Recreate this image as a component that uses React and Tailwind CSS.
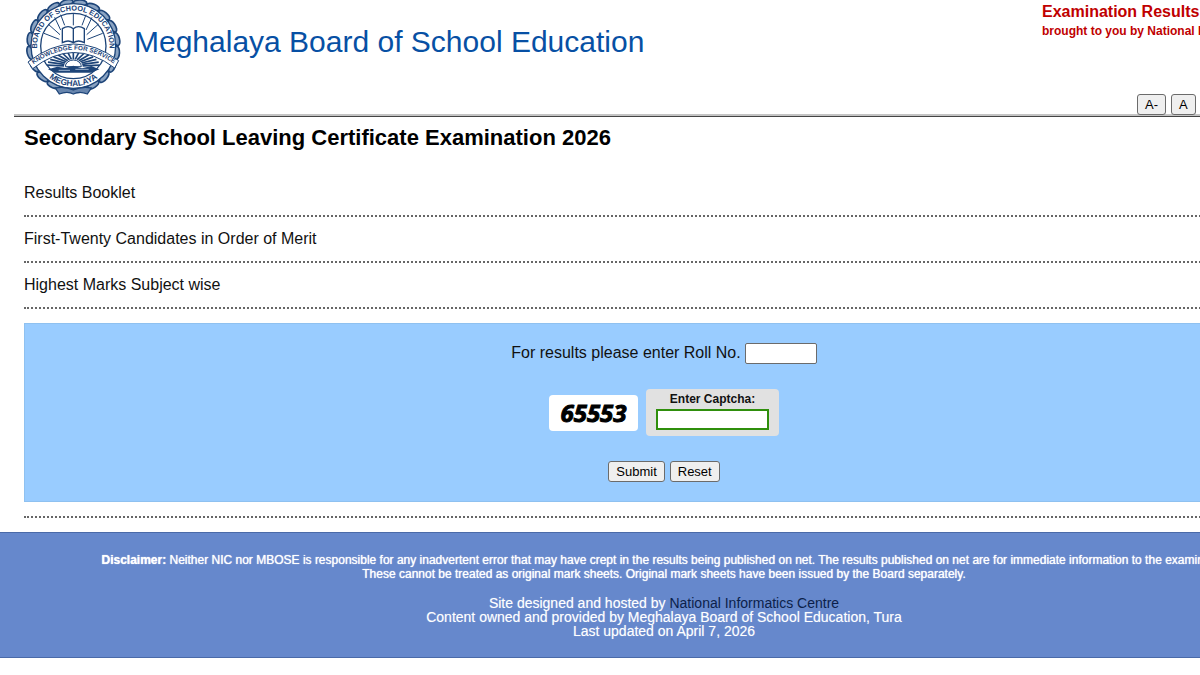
import { useState } from 'react';

const bookletLinks = [
    'Results Booklet',
    'First-Twenty Candidates in Order of Merit',
    'Highest Marks Subject wise',
];

const bookRays = [
    [118, 118, 72, 100],
    [120, 104, 84, 72],
    [122, 90, 104, 52],
    [134, 76, 122, 44],
    [160, 76, 160, 42],
    [186, 76, 198, 44],
    [198, 90, 216, 52],
    [200, 104, 236, 72],
    [202, 118, 248, 100],
];

const scallops = Array.from({ length: 20 }, (_, i) => {
    const angle = ((i + 0.5) / 20) * Math.PI * 2;
    return [160 + Math.cos(angle) * 131, 138 + Math.sin(angle) * 131, (angle * 180) / Math.PI + 84];
});

const sunRays = Array.from({ length: 15 }, (_, i) => {
    const angle = Math.PI + ((i + 0.5) / 15) * Math.PI;
    const cos = Math.cos(angle);
    const sin = Math.sin(angle);
    return [160 + cos * 28, 200 + sin * 22, 160 + cos * 80, 200 + sin * 44];
});

function BoardLogo() {
    return (
        <svg viewBox="0 0 330 300" className="h-[100px] w-[110px] shrink-0" role="img" aria-label="Board seal">
            <defs>
                <path id="seal-top" d="M 54 166 A 109 109 0 1 1 266 166" />
                <path id="seal-bottom" d="M 57 200 A 120 120 0 0 0 263 200" />
                <path id="seal-ribbon" d="M 36 196 Q 160 104 286 194" />
            </defs>

            {/* leafy rim */}
            {scallops.map(([x, y, turn], i) => (
                <ellipse
                    key={i}
                    rx="20"
                    ry="9"
                    transform={`translate(${x} ${y}) rotate(${turn})`}
                    fill="#8aa3c2"
                    stroke="#1d4478"
                    strokeWidth="5"
                />
            ))}
            <circle cx="160" cy="138" r="127" fill="#fff" stroke="#1d4478" strokeWidth="4" />
            <circle cx="160" cy="138" r="98" fill="#fff" stroke="#1d4478" strokeWidth="4" />

            {/* book and its rays */}
            <g stroke="#1d4478" strokeWidth="3">
                {bookRays.map(([x1, y1, x2, y2], i) => (
                    <line key={i} x1={x1} y1={y1} x2={x2} y2={y2} />
                ))}
            </g>
            <path
                d="M127 86 Q145 74 160 86 Q175 74 193 86 V128 Q175 118 160 128 Q145 118 127 128 Z M160 86 V128"
                fill="#fff"
                stroke="#1d4478"
                strokeWidth="4"
            />

            {/* rising sun over the hills */}
            <g stroke="#1d4478" strokeWidth="5">
                {sunRays.map(([x1, y1, x2, y2], i) => (
                    <line key={i} x1={x1} y1={y1} x2={x2} y2={y2} />
                ))}
            </g>
            <path d="M136 200 A24 20 0 0 1 184 200 Z" fill="#fff" stroke="#1d4478" strokeWidth="3" />
            <path d="M84 208 L112 200 L136 204 L160 197 L186 205 L214 198 L238 208 L214 218 H106 Z" fill="#1d4478" />
            <path d="M116 211 H150 M166 208 H206" stroke="#9db4d0" strokeWidth="3" />

            {/* ribbon */}
            <path
                d="M24 186 Q160 80 296 182 L284 204 Q160 110 38 206 Z"
                fill="#fff"
                stroke="#1d4478"
                strokeWidth="3"
            />
            <path
                d="M106 264 Q134 258 160 270 Q186 258 214 264 L202 282 Q178 272 160 282 Q142 272 118 282 Z"
                fill="#6785ad"
                stroke="#1d4478"
                strokeWidth="4"
            />

            <g fill="#1d4478" className="font-['Liberation_Sans',sans-serif] font-bold">
                <text fontSize="22" textAnchor="middle">
                    <textPath href="#seal-top" startOffset="50%">BOARD OF SCHOOL EDUCATION</textPath>
                </text>
                <text fontSize="19" textAnchor="middle">
                    <textPath href="#seal-ribbon" startOffset="50%">KNOWLEDGE FOR SERVICE</textPath>
                </text>
                <text fontSize="25" textAnchor="middle">
                    <textPath href="#seal-bottom" startOffset="50%">MEGHALAYA</textPath>
                </text>
            </g>
        </svg>
    );
}

function GreyButton({ children, ...props }) {
    return (
        <button
            className="h-[21px] rounded-[3px] border border-[#6b6b6b] bg-[#efefef] px-[7px] text-[13px] leading-4 font-normal text-black hover:bg-[#e3e3e3]"
            {...props}
        >
            {children}
        </button>
    );
}

function Header({ onResize }) {
    return (
        <header className="ml-3.5 flex items-start justify-between border-b border-[#444] shadow-[inset_0_-2px_0_#c4c4c4]">
            <div className="flex items-start pl-1.5">
                <BoardLogo />
                <h1 className="pt-[22px] pl-1 text-[30px] leading-10 text-[#0750a4]">
                    Meghalaya Board of School Education
                </h1>
            </div>
            <div className="w-[286px] shrink-0 font-bold text-[#c00000]">
                <p className="pt-0.5 text-base leading-5">Examination Results</p>
                <p className="text-xs leading-[18px]">brought to you by National Informatics Centre</p>
                <div className="mt-[54px] mb-px flex gap-[5px] pl-[95px]">
                    <GreyButton type="button" onClick={() => onResize('A-')}>A-</GreyButton>
                    <GreyButton type="button" onClick={() => onResize('A')}>A</GreyButton>
                    <GreyButton type="button" onClick={() => onResize('A+')}>A+</GreyButton>
                </div>
            </div>
        </header>
    );
}

function ResultForm() {
    const [rollNo, setRollNo] = useState('');
    const [captcha, setCaptcha] = useState('');

    const handleReset = () => {
        setRollNo('');
        setCaptcha('');
    };

    return (
        <form
            className="mt-3.5 flex flex-col items-center border border-[#8fc1f0] bg-[#99ccff] pt-[17px] pr-6 pb-[19px]"
            onSubmit={(e) => e.preventDefault()}
            onReset={handleReset}
        >
            <div className="flex items-center gap-1">
                <label htmlFor="roll">For results please enter Roll No.</label>
                <input
                    id="roll"
                    value={rollNo}
                    onChange={(e) => setRollNo(e.target.value)}
                    className="h-[21px] w-[72px] rounded-xs border border-[#6b6b6b] bg-white px-1 text-[13px]"
                />
            </div>
            <div className="mt-6 flex items-center gap-2">
                <div className="flex h-9 w-[89px] items-center justify-center rounded bg-white font-[Impact,'Open_Sans',sans-serif] text-2xl font-bold text-black italic [-webkit-text-stroke:1px_black]">
                    65553
                </div>
                <div className="flex flex-col items-center gap-0.5 rounded bg-[#e1e1e1] px-2.5 pt-0.5 pb-1.5">
                    <label htmlFor="captcha" className="text-xs leading-4 font-bold">Enter Captcha:</label>
                    <input
                        id="captcha"
                        value={captcha}
                        onChange={(e) => setCaptcha(e.target.value)}
                        className="h-[21px] w-[113px] border-2 border-[#2f8f0c] bg-white px-1 text-[13px]"
                    />
                </div>
            </div>
            <div className="mt-[25px] flex gap-[5px]">
                <GreyButton type="submit">Submit</GreyButton>
                <GreyButton type="reset">Reset</GreyButton>
            </div>
        </form>
    );
}

function Footer() {
    return (
        <footer className="mt-3.5 border-y border-[#4a6aa8] bg-[#6688cc] pt-5 pb-[19px] text-center text-sm leading-[14px] text-white">
            <p className="text-xs leading-[14px] whitespace-nowrap text-shadow-[0_0_1px_#fff]">
                <b>Disclaimer:</b> Neither NIC nor MBOSE is responsible for any inadvertent error that may have crept in
                the results being published on net. The results published on net are for immediate information to the
                examinees.
                <br />
                These cannot be treated as original mark sheets. Original mark sheets have been issued by the Board
                separately.
            </p>
            <p className="mt-[15px] text-shadow-[0_0_1px_#ffffff66]">
                Site designed and hosted by{' '}
                <a href="#nic" className="text-[#0c1f4a] text-shadow-none">National Informatics Centre</a>
                <br />
                Content owned and provided by Meghalaya Board of School Education, Tura
                <br />
                Last updated on April 7, 2026
            </p>
        </footer>
    );
}

export default function App() {
    const [size, setSize] = useState('A');
    const zoom = size === 'A-' ? 'text-sm' : size === 'A+' ? 'text-lg' : 'text-base';

    return (
        <div className="overflow-hidden bg-white font-['Liberation_Sans',Arial,sans-serif] text-[#111]">
            <div className="-mr-32">
                <Header onResize={setSize} />
                <main className={`pl-6 leading-6 ${zoom}`}>
                    <h2 className="pt-1.5 text-[22px] leading-[30px] font-bold text-black">
                        Secondary School Leaving Certificate Examination 2026
                    </h2>
                    <nav className="pt-[18px]">
                        {bookletLinks.map((label) => (
                            <a
                                key={label}
                                href="#results"
                                className="block border-b-2 border-dotted border-[#666] py-2.5 leading-6"
                            >
                                {label}
                            </a>
                        ))}
                    </nav>
                    <ResultForm />
                    <hr className="mt-3.5 border-t-2 border-dotted border-[#666]" />
                </main>
                <Footer />
            </div>
        </div>
    );
}
